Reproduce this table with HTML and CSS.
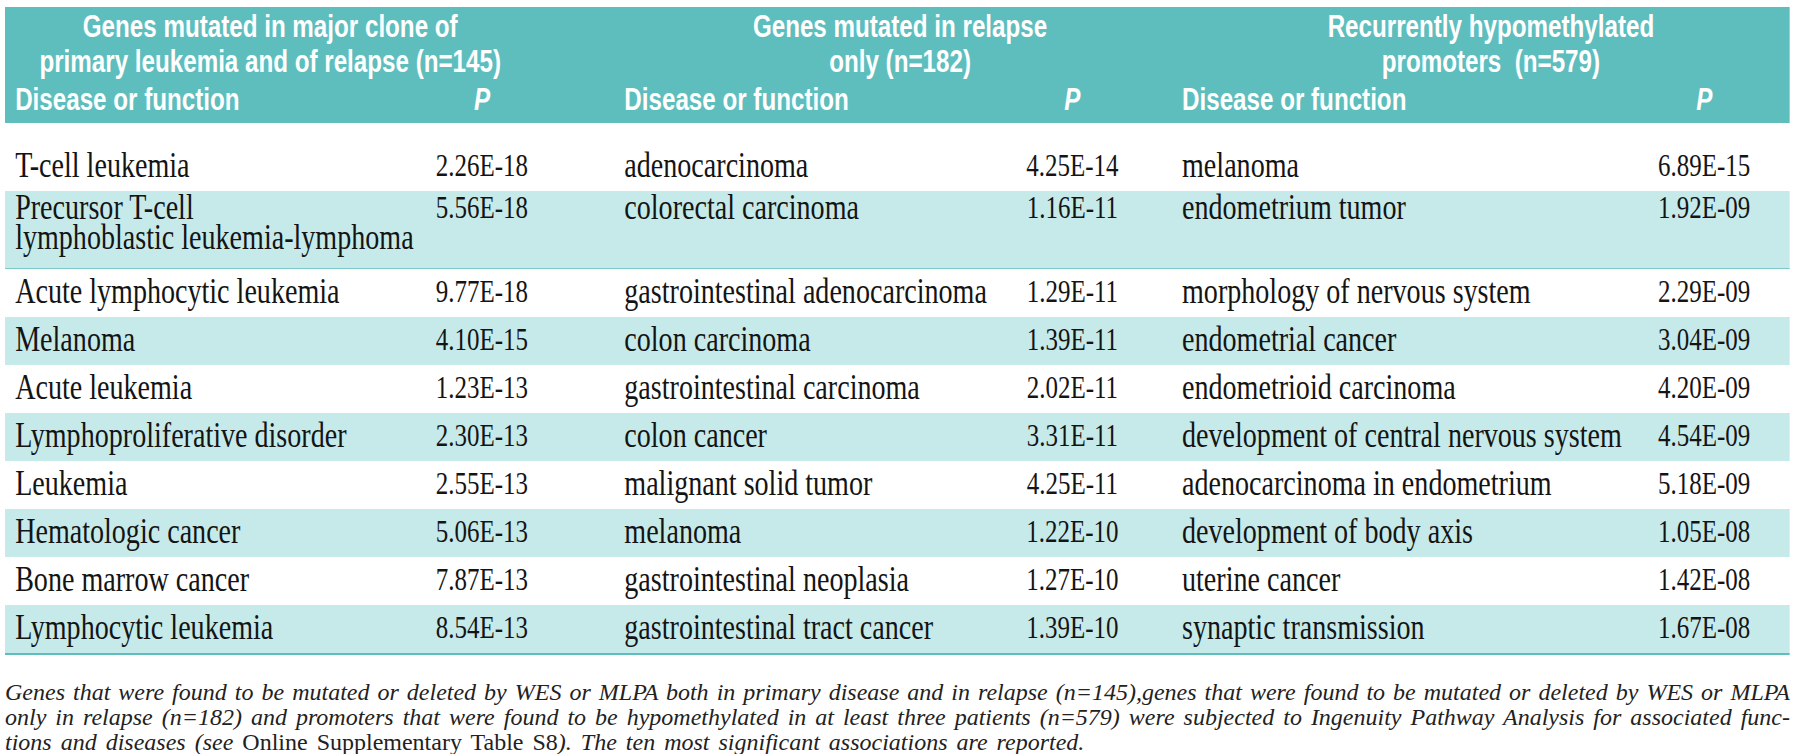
FILE: index.html
```html
<!DOCTYPE html>
<html lang="en">
<head>
<meta charset="utf-8">
<title>Table</title>
<link rel="stylesheet" href="styles.css">
</head>
<body>
<div class="page">
  <div class="table">
    <div class="thead">
      <div class="cols titles">
        <div class="tt g1">Genes mutated in major clone of<br>primary leukemia and of relapse (n=145)</div>
        <div class="tt g2">Genes mutated in relapse<br>only (n=182)</div>
        <div class="tt g3">Recurrently hypomethylated<br>promoters&nbsp; (n=579)</div>
      </div>
      <div class="cols sub">
        <div class="lbl l1">Disease or function</div><div class="val"><i>P</i></div>
        <div class="lbl l2">Disease or function</div><div class="val"><i>P</i></div>
        <div class="lbl l3">Disease or function</div><div class="val"><i>P</i></div>
      </div>
    </div>
    <div class="tbody">
      <div class="cols row">
        <div class="lbl l1">T-cell leukemia</div><div class="val">2.26E-18</div>
        <div class="lbl l2">adenocarcinoma</div><div class="val">4.25E-14</div>
        <div class="lbl l3">melanoma</div><div class="val">6.89E-15</div>
      </div>
      <div class="cols row alt two">
        <div class="lbl l1">Precursor T-cell<br>lymphoblastic leukemia-lymphoma</div><div class="val">5.56E-18</div>
        <div class="lbl l2">colorectal carcinoma</div><div class="val">1.16E-11</div>
        <div class="lbl l3">endometrium tumor</div><div class="val">1.92E-09</div>
      </div>
      <div class="cols row">
        <div class="lbl l1">Acute lymphocytic leukemia</div><div class="val">9.77E-18</div>
        <div class="lbl l2">gastrointestinal adenocarcinoma</div><div class="val">1.29E-11</div>
        <div class="lbl l3">morphology of nervous system</div><div class="val">2.29E-09</div>
      </div>
      <div class="cols row alt">
        <div class="lbl l1">Melanoma</div><div class="val">4.10E-15</div>
        <div class="lbl l2">colon carcinoma</div><div class="val">1.39E-11</div>
        <div class="lbl l3">endometrial cancer</div><div class="val">3.04E-09</div>
      </div>
      <div class="cols row">
        <div class="lbl l1">Acute leukemia</div><div class="val">1.23E-13</div>
        <div class="lbl l2">gastrointestinal carcinoma</div><div class="val">2.02E-11</div>
        <div class="lbl l3">endometrioid carcinoma</div><div class="val">4.20E-09</div>
      </div>
      <div class="cols row alt">
        <div class="lbl l1">Lymphoproliferative disorder</div><div class="val">2.30E-13</div>
        <div class="lbl l2">colon cancer</div><div class="val">3.31E-11</div>
        <div class="lbl l3">development of central nervous system</div><div class="val">4.54E-09</div>
      </div>
      <div class="cols row">
        <div class="lbl l1">Leukemia</div><div class="val">2.55E-13</div>
        <div class="lbl l2">malignant solid tumor</div><div class="val">4.25E-11</div>
        <div class="lbl l3">adenocarcinoma in endometrium</div><div class="val">5.18E-09</div>
      </div>
      <div class="cols row alt">
        <div class="lbl l1">Hematologic cancer</div><div class="val">5.06E-13</div>
        <div class="lbl l2">melanoma</div><div class="val">1.22E-10</div>
        <div class="lbl l3">development of body axis</div><div class="val">1.05E-08</div>
      </div>
      <div class="cols row">
        <div class="lbl l1">Bone marrow cancer</div><div class="val">7.87E-13</div>
        <div class="lbl l2">gastrointestinal neoplasia</div><div class="val">1.27E-10</div>
        <div class="lbl l3">uterine cancer</div><div class="val">1.42E-08</div>
      </div>
      <div class="cols row alt">
        <div class="lbl l1">Lymphocytic leukemia</div><div class="val">8.54E-13</div>
        <div class="lbl l2">gastrointestinal tract cancer</div><div class="val">1.39E-10</div>
        <div class="lbl l3">synaptic transmission</div><div class="val">1.67E-08</div>
      </div>
    </div>
  </div>
  <div class="caption">
    <p class="cl just">Genes that were found to be mutated or deleted by WES or MLPA both in primary disease and in relapse (n=145),genes that were found to be mutated or deleted by WES or MLPA</p>
    <p class="cl just">only in relapse (n=182) and promoters that were found to be hypomethylated in at least three patients (n=579) were subjected to Ingenuity Pathway Analysis for associated func-</p>
    <p class="cl last">tions and diseases (see <span class="up">Online Supplementary Table S8</span>). The ten most significant associations are reported.</p>
  </div>
</div>
</body>
</html>
```

FILE: styles.css
```css
* {
  box-sizing: border-box;
}

html,
body {
  margin: 0;
  padding: 0;
  background: #ffffff;
}

body {
  overflow: hidden;
}

.page {
  width: 1800px;
  height: 754px;
  padding: 7px 0 0 5px;
}

/* The source table is set in a horizontally condensed face:
   the table is laid out wide and condensed as a whole. */
.table {
  width: 2288px;
  transform: scaleX(0.78);
  transform-origin: 0 0;
}

.cols {
  display: grid;
  grid-template-columns: 538px 147px 610px 147px 663px 147px;
}

.thead {
  height: 116px;
  padding: 2px 0 8px;
  background: #5ebebe;
  color: #ffffff;
  font-family: "Liberation Sans", Arial, sans-serif;
  font-weight: 700;
  font-size: 31px;
  line-height: 31px;
}

.titles {
  line-height: 35px;
}

.tt {
  grid-column: span 2;
  text-align: center;
}

.g1 {
  padding-right: 5px;
}

.g2 {
  padding-left: 168px;
}

.g3 {
  padding-left: 116px;
}

.sub {
  margin-top: 5px;
}

.lbl {
  white-space: nowrap;
}

.l1 {
  padding-left: 13px;
}

.l2 {
  padding-left: 109px;
}

.l3 {
  padding-left: 67px;
}

.val {
  text-align: center;
  white-space: nowrap;
}

.tbody {
  margin-top: 20px;
  border-bottom: 2px solid #5ebebe;
  font-family: "Liberation Serif", "Times New Roman", serif;
  font-size: 36px;
  line-height: 30px;
  color: #141414;
}

.tbody .val {
  font-size: 32px;
}

.row {
  padding: 7px 0 11px;
}

.row.alt {
  background: #c6eaea;
}

.row.two {
  padding: 1px 0 16px;
  border-bottom: 1px solid #7cc8c8;
}

.caption {
  width: 1785px;
  margin-top: 25px;
  font-family: "Liberation Serif", "Times New Roman", serif;
  font-style: italic;
  font-size: 24px;
  line-height: 25px;
  color: #222222;
}

.cl {
  margin: 0;
  text-align: left;
}

.cl.just {
  text-align: justify;
  text-align-last: justify;
}

.cl.last {
  word-spacing: 3px;
}

.up {
  font-style: normal;
}
```
